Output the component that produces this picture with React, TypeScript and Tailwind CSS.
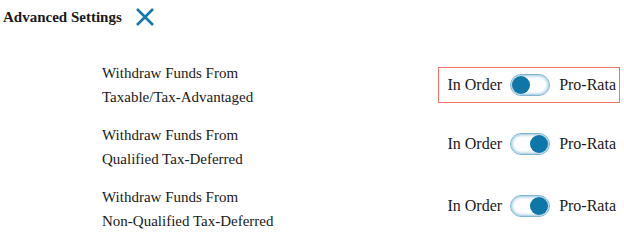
import { useState } from "react";

const rows = [
    { line1: "Withdraw Funds From", line2: "Taxable/Tax-Advantaged", on: false, focused: true },
    { line1: "Withdraw Funds From", line2: "Qualified Tax-Deferred", on: true, focused: false },
    { line1: "Withdraw Funds From", line2: "Non-Qualified Tax-Deferred", on: true, focused: false },
];

function Toggle({ on, onClick }: { on: boolean; onClick: () => void }) {
    return (
        <button
            onClick={onClick}
            className={`relative w-[40px] h-[22px] rounded-full bg-white border border-[#7db6d6] shadow-[inset_0_0_3px_1px_rgba(16,120,168,0.45)] flex items-center px-[1px] ${on ? "justify-end" : "justify-start"}`}
        >
            <span className="block w-[18px] h-[18px] rounded-full bg-[#0e77a8]" />
        </button>
    );
}

export default function App() {
    const [state, setState] = useState(rows.map((r) => r.on));

    return (
        <div className="w-[624px] h-[244px] bg-white text-[#1a1a1a] font-['Times_New_Roman','Liberation_Serif',serif] overflow-hidden">
            <div className="flex items-center h-[34px] pl-[3px] gap-[13px]">
                <span className="text-[15px] font-bold">Advanced Settings</span>
                <svg width="20" height="20" viewBox="0 0 20 20" className="text-[#1677aa]">
                    <path d="M2 2 L18 18 M18 2 L2 18" stroke="currentColor" strokeWidth="2.6" fill="none" />
                </svg>
            </div>
            <div className="flex flex-col gap-[14px] pt-[27px]">
                {rows.map((r, i) => (
                    <div key={i} className="flex items-center h-[48px] pr-[4px]">
                        <div className="pl-[102px] text-[15px] leading-[24px]">
                            <div>{r.line1}</div>
                            <div>{r.line2}</div>
                        </div>
                        <div
                            className={`ml-auto flex items-center h-[36px] pl-[8px] pr-[3px] border ${r.focused ? "border-[#f07468]" : "border-transparent"} ${i > 0 ? "-mt-[6px]" : ""}`}
                        >
                            <span className="text-[16px]">In Order</span>
                            <span className="ml-[8px]">
                                <Toggle
                                    on={state[i]}
                                    onClick={() => setState(state.map((s, j) => (j === i ? !s : s)))}
                                />
                            </span>
                            <span className="ml-[9px] text-[16px]">Pro-Rata</span>
                        </div>
                    </div>
                ))}
            </div>
        </div>
    );
}
